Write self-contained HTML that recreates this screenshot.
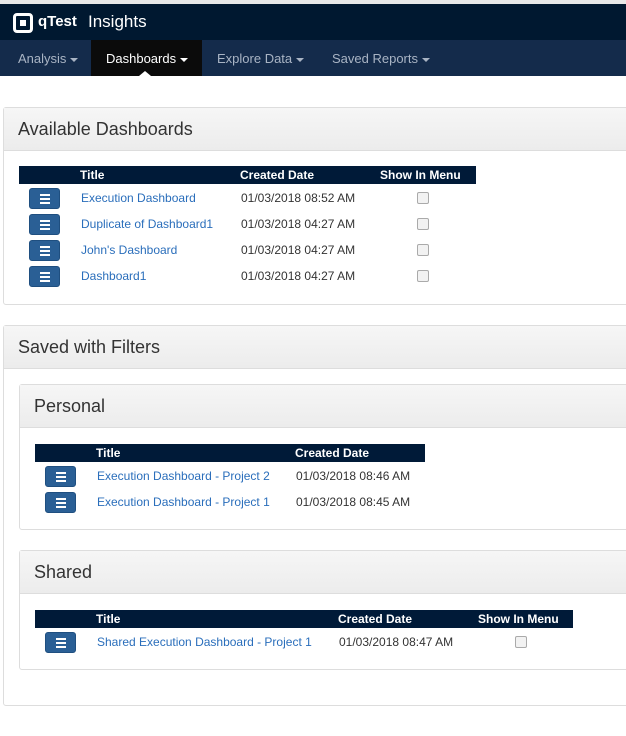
<!DOCTYPE html><html><head><style>
*{box-sizing:border-box;margin:0;padding:0}
body{width:626px;height:736px;overflow:hidden;background:#fff;font-family:"Liberation Sans",sans-serif;font-size:12px;color:#333;position:relative}
.top{position:absolute;left:0;top:0;width:626px;height:4px;background:#e8e8e8}
.hdr{position:absolute;left:0;top:4px;width:626px;height:36px;background:#001830}
.logo{position:absolute;left:13px;top:9px;width:20px;height:20px;border:3px solid #fff;border-radius:4px}
.logo:after{content:"";position:absolute;left:4px;top:4px;width:6px;height:6px;background:#fff}
.hdr .q{position:absolute;left:38px;top:9px;color:#fff;font-weight:bold;font-size:15px}
.hdr .i{position:absolute;left:88px;top:8px;color:#fff;font-size:17px}
.nav{position:absolute;left:0;top:40px;width:626px;height:36px;background:#142b4b}
.nav span{position:absolute;top:11px;color:#a9b4c4;font-size:13px}
.nav .act{position:absolute;left:91px;top:0;width:111px;height:36px;background:#0b0b0b}
.car{display:inline-block;width:0;height:0;border-left:4px solid transparent;border-right:4px solid transparent;border-top:4px solid currentColor;vertical-align:middle;margin-left:4px}
.panel{position:absolute;border:1px solid #ddd;border-radius:3px;background:#fff}
.ph{background:linear-gradient(#f6f6f6,#ececec);border-bottom:1px solid #ddd;font-size:18px;color:#333;padding-left:14px}
.th{position:absolute;height:18px;background:#001a38;color:#fff;font-weight:bold;font-size:12px}
.th span{position:absolute;top:2px;white-space:nowrap}
.row{position:absolute;height:26px}
.row a{position:absolute;top:3px;color:#2a6ebb;text-decoration:none;font-size:12px;white-space:nowrap}
.btn{position:absolute;left:0;top:0;width:31px;height:21px;background:#2a5f95;border-radius:3px;border:1px solid #1f4f80}
.btn:after{content:"";position:absolute;left:10px;top:5px;width:10px;height:2px;background:#fff;box-shadow:0 4px #fff,0 8px #fff}
.row span{position:absolute;top:3px;color:#333;white-space:nowrap}
.cb{position:absolute;top:4px;width:12px;height:12px;border:1px solid #aaa;border-radius:2px;background:#f2f2f2}
</style></head><body>
<div class="top"></div>
<div class="hdr"><div class="logo"></div><span class="q">qTest</span><span class="i">Insights</span></div>
<div class="nav"><div class="act"></div>
<span style="left:18px">Analysis<i class="car"></i></span>
<span style="left:106px;color:#fff">Dashboards<i class="car"></i></span>
<span style="left:217px">Explore Data<i class="car"></i></span>
<span style="left:332px">Saved Reports<i class="car"></i></span>
<div style="position:absolute;left:139px;top:31px;border-left:6px solid transparent;border-right:6px solid transparent;border-bottom:5px solid #fff"></div>
</div>

<div class="panel" style="left:3px;top:107px;width:640px;height:198px">
<div class="ph" style="height:43px;line-height:43px">Available Dashboards</div>
<div class="th" style="left:15px;top:58px;width:457px"><span style="left:61px">Title</span><span style="left:221px">Created Date</span><span style="left:361px">Show In Menu</span></div>
<div class="row" style="left:25px;top:80px;width:440px"><div class="btn"></div><a style="left:52px">Execution Dashboard</a><span style="left:212px">01/03/2018 08:52 AM</span><div class="cb" style="left:388px"></div></div>
<div class="row" style="left:25px;top:106px;width:440px"><div class="btn"></div><a style="left:52px">Duplicate of Dashboard1</a><span style="left:212px">01/03/2018 04:27 AM</span><div class="cb" style="left:388px"></div></div>
<div class="row" style="left:25px;top:132px;width:440px"><div class="btn"></div><a style="left:52px">John's Dashboard</a><span style="left:212px">01/03/2018 04:27 AM</span><div class="cb" style="left:388px"></div></div>
<div class="row" style="left:25px;top:158px;width:440px"><div class="btn"></div><a style="left:52px">Dashboard1</a><span style="left:212px">01/03/2018 04:27 AM</span><div class="cb" style="left:388px"></div></div>
</div>

<div class="panel" style="left:3px;top:325px;width:640px;height:381px">
<div class="ph" style="height:43px;line-height:43px">Saved with Filters</div>
<div class="panel" style="left:15px;top:58px;width:620px;height:146px">
<div class="ph" style="height:43px;line-height:43px">Personal</div>
<div class="th" style="left:15px;top:59px;width:390px"><span style="left:61px">Title</span><span style="left:260px">Created Date</span></div>
<div class="row" style="left:25px;top:81px;width:400px"><div class="btn"></div><a style="left:52px">Execution Dashboard - Project 2</a><span style="left:251px">01/03/2018 08:46 AM</span></div>
<div class="row" style="left:25px;top:107px;width:400px"><div class="btn"></div><a style="left:52px">Execution Dashboard - Project 1</a><span style="left:251px">01/03/2018 08:45 AM</span></div>
</div>
<div class="panel" style="left:15px;top:224px;width:620px;height:120px">
<div class="ph" style="height:43px;line-height:43px">Shared</div>
<div class="th" style="left:15px;top:59px;width:538px"><span style="left:61px">Title</span><span style="left:303px">Created Date</span><span style="left:443px">Show In Menu</span></div>
<div class="row" style="left:25px;top:81px;width:520px"><div class="btn"></div><a style="left:52px">Shared Execution Dashboard - Project 1</a><span style="left:294px">01/03/2018 08:47 AM</span><div class="cb" style="left:470px"></div></div>
</div>
</div>
</body></html>
